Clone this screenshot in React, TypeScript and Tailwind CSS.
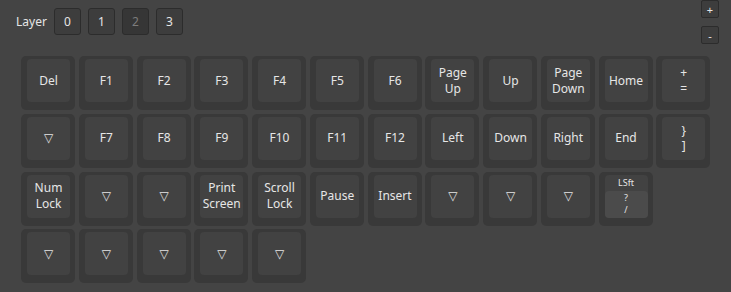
import React from "react";

type KeyDef = { l?: string[]; tri?: boolean; lsft?: boolean };

const rows: KeyDef[][] = [
  [
    { l: ["Del"] }, { l: ["F1"] }, { l: ["F2"] }, { l: ["F3"] }, { l: ["F4"] }, { l: ["F5"] },
    { l: ["F6"] }, { l: ["Page", "Up"] }, { l: ["Up"] }, { l: ["Page", "Down"] }, { l: ["Home"] }, { l: ["+", "="] },
  ],
  [
    { tri: true }, { l: ["F7"] }, { l: ["F8"] }, { l: ["F9"] }, { l: ["F10"] }, { l: ["F11"] },
    { l: ["F12"] }, { l: ["Left"] }, { l: ["Down"] }, { l: ["Right"] }, { l: ["End"] }, { l: ["}", "]"] },
  ],
  [
    { l: ["Num", "Lock"] }, { tri: true }, { tri: true }, { l: ["Print", "Screen"] }, { l: ["Scroll", "Lock"] },
    { l: ["Pause"] }, { l: ["Insert"] }, { tri: true }, { tri: true }, { tri: true }, { lsft: true },
  ],
  [{ tri: true }, { tri: true }, { tri: true }, { tri: true }, { tri: true }],
];

function Key({ k }: { k: KeyDef }) {
  return (
    <div className="w-[54px] h-[54px] rounded-[5px] bg-[#393939] pt-[3px] pl-[6px] pr-[5px] pb-[8px] shrink-0">
      {k.lsft ? (
        <div className="w-full h-full rounded-[4px] bg-[#424242] flex flex-col">
          <div className="h-[16px] flex items-center justify-center text-[9px] leading-[12px] text-[#e6e6e6]">LSft</div>
          <div className="flex-1 rounded-[4px] bg-[#4b4b4b] flex flex-col items-center justify-center text-[9px] leading-[12px] text-[#e6e6e6]">
            <span>?</span>
            <span>/</span>
          </div>
        </div>
      ) : (
        <div className="w-full h-full rounded-[4px] bg-[#424242] flex flex-col items-center justify-center text-[12px] leading-[15.6px] text-[#e6e6e6]">
          {k.tri ? (
            <span className="text-[12px] leading-[14px]" style={{ fontFamily: '"DejaVu Sans", sans-serif' }}>▽</span>
          ) : (
            k.l!.map((t, i) => <span key={i}>{t}</span>)
          )}
        </div>
      )}
    </div>
  );
}

export default function App() {
  return (
    <div
      className="w-[731px] h-[292px] bg-[#444444] overflow-hidden"
      style={{ fontFamily: '"Noto Sans", "Open Sans", sans-serif' }}
    >
      <div className="h-[56px] flex justify-between">
        <div className="flex items-start pt-[8px] pl-[16px]">
          <span className="text-[12px] leading-[27px] text-[#e6e6e6] mr-[7px]">Layer</span>
          <div className="flex gap-[7px]">
            {["0", "1", "2", "3"].map((n) => (
              <div
                key={n}
                className={
                  n === "2"
                    ? "w-[27px] h-[27px] rounded-[3px] border border-[#2c2c2c] bg-[#363636] text-[#7c7c7c] text-[12px] flex items-center justify-center"
                    : "w-[27px] h-[27px] rounded-[3px] border border-[#2c2c2c] bg-[#3d3d3d] text-[#e6e6e6] text-[12px] flex items-center justify-center"
                }
              >
                {n}
              </div>
            ))}
          </div>
        </div>
        <div className="flex flex-col gap-[8px] pr-[12px]">
          <div className="w-[18px] h-[18px] rounded-[2px] border border-[#2c2c2c] bg-[#3d3d3d] text-[#e6e6e6] text-[11px] leading-none flex items-center justify-center">+</div>
          <div className="w-[18px] h-[18px] rounded-[2px] border border-[#2c2c2c] bg-[#3d3d3d] text-[#e6e6e6] text-[11px] leading-none flex items-center justify-center">-</div>
        </div>
      </div>
      <div className="pl-[21px] flex flex-col gap-[3.75px]">
        {rows.map((r, i) => (
          <div key={i} className="flex gap-[3.75px]">
            {r.map((k, j) => (
              <Key key={j} k={k} />
            ))}
          </div>
        ))}
      </div>
    </div>
  );
}
